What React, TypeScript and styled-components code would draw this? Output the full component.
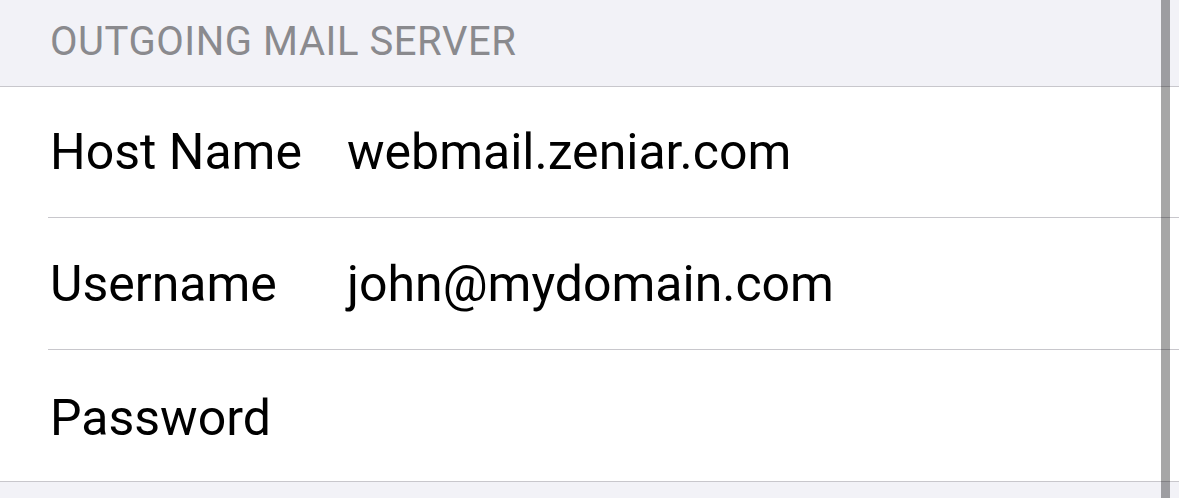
import React from "react";
import styled, { createGlobalStyle } from "styled-components";

const Global = createGlobalStyle`
  html, body { margin: 0; padding: 0; background: #f2f2f7; }
  body { font-family: Roboto, "Liberation Sans", sans-serif; -webkit-font-smoothing: antialiased; }
`;

const Page = styled.div`
  position: relative;
  width: 1179px;
  height: 498px;
  overflow: hidden;
  background: #f2f2f7;
`;

const SectionHeader = styled.div`
  box-sizing: border-box;
  height: 87px;
  padding: 22px 0 0 50px;
  font-size: 40px;
  line-height: 40px;
  color: #8a8a8e;
  letter-spacing: 0.55px;
  border-bottom: 1px solid #c8c7cc;
`;

const Group = styled.div`
  background: #ffffff;
  border-bottom: 1px solid #c8c7cc;
  padding-left: 48px;
`;

const Row = styled.div<{ $h: number; $last?: boolean }>`
  height: ${(p) => p.$h}px;
  box-sizing: border-box;
  display: flex;
  align-items: center;
  padding-left: 2px;
  padding-top: ${(p) => (p.$last ? 4 : 0)}px;
  border-bottom: ${(p) => (p.$last ? "none" : "1px solid #c8c7cc")};
`;

const Label = styled.div`
  width: 297px;
  flex: none;
  font-size: 50px;
  color: #000;
`;

const Value = styled.div`
  font-size: 50px;
  color: #000;
`;

const Scrollbar = styled.div`
  position: absolute;
  top: 0;
  bottom: 0;
  left: 1161px;
  width: 9px;
  background: rgba(0, 0, 0, 0.35);
`;

const rows = [
  { label: "Host Name", value: "webmail.zeniar.com", h: 131 },
  { label: "Username", value: "john@mydomain.com", h: 132 },
  { label: "Password", value: "", h: 131 },
];

export default function App() {
  return (
    <>
      <Global />
      <Page>
        <SectionHeader>OUTGOING MAIL SERVER</SectionHeader>
        <Group>
          {rows.map((r, i) => (
            <Row key={r.label} $h={r.h} $last={i === rows.length - 1}>
              <Label>{r.label}</Label>
              <Value>{r.value}</Value>
            </Row>
          ))}
        </Group>
        <Scrollbar />
      </Page>
    </>
  );
}
